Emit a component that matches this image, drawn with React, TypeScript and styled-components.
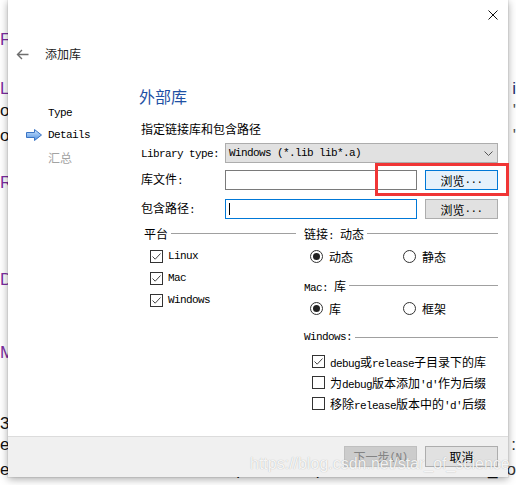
import React from "react";
import styled, { createGlobalStyle } from "styled-components";

const Global = createGlobalStyle`
  html, body { margin: 0; padding: 0; background: #fff; }
  body { width: 516px; height: 485px; overflow: hidden; }
  #root { width: 516px; height: 485px; }
`;

const Screen = styled.div`
  position: relative;
  width: 516px;
  height: 485px;
  overflow: hidden;
  background: #fff;
`;

/* ---------- background page (behind the dialog) ---------- */
const BgPage = styled.div`
  display: flex;
  flex-direction: column;
  font-family: "Liberation Sans", Arial, sans-serif;
  font-size: 17px;
  line-height: 20px;
`;

const BgLine = styled.div<{ $mt: number; $color?: string }>`
  margin-top: ${(p) => p.$mt}px;
  height: 20px;
  display: flex;
  justify-content: space-between;
  white-space: nowrap;
  color: ${(p) => p.$color ?? "#111"};
`;

const BgRight = styled.span<{ $color?: string }>`
  color: ${(p) => p.$color ?? "#333"};
`;

const BgFrag = styled.span<{ $ml: number }>`
  margin-left: ${(p) => p.$ml}px;
`;

const BgRun = styled.span`
  display: flex;
`;

/* ---------- dialog window ---------- */
const Dialog = styled.div`
  position: absolute;
  left: 8px;
  top: 0;
  width: 500px;
  height: 477px;
  background: #fff;
  box-shadow: 0 0 0 1px rgba(0, 0, 0, 0.05), 0 2px 8px rgba(0, 0, 0, 0.35);
  display: flex;
  flex-direction: column;
  font-family: "Noto Sans CJK SC", "Liberation Sans", sans-serif;
  font-size: 12px;
  color: #000;
`;

const TopBar = styled.div`
  height: 40px;
  box-sizing: border-box;
  padding: 10px 10px 0 0;
  display: flex;
  justify-content: flex-end;
  align-items: flex-start;
`;

const CloseButton = styled.span`
  width: 10px;
  height: 10px;
  display: flex;
`;

const Header = styled.div`
  height: 28px;
  display: flex;
  align-items: center;
  padding-left: 8px;
`;

const BackArrow = styled.span`
  width: 13px;
  height: 11px;
  display: flex;
`;

const Title = styled.span`
  margin-left: 16px;
  color: #222;
  font-size: 12px;
  line-height: 16px;
`;

const Body = styled.div`
  flex: 1;
  display: grid;
  grid-template-columns: 131px 1fr;
  padding-right: 10px;
`;

const Nav = styled.nav`
  padding-top: 34px;
  display: flex;
  flex-direction: column;
`;

const NavItem = styled.div<{ $muted?: boolean }>`
  height: 22px;
  display: flex;
  align-items: center;
  gap: 6px;
  padding-left: 18px;
  color: ${(p) => (p.$muted ? "#a3a3a3" : "#000")};
`;

const NavIconSlot = styled.span`
  width: 16px;
  height: 12px;
  display: flex;
`;

const Content = styled.div`
  padding-top: 18px;
  display: flex;
  flex-direction: column;
`;

const Heading = styled.h1`
  margin: 0;
  font-size: 16px;
  line-height: 20px;
  font-weight: 400;
  color: #1e50a4;
`;

const Desc = styled.p`
  margin: 15px 0 0;
  padding-left: 2px;
  line-height: 16px;
`;

const Lat = styled.span`
  font-family: "Liberation Mono", "Courier New", monospace;
  font-size: 11px;
  letter-spacing: -0.6px;
`;

const FormRow = styled.div<{ $mt: number }>`
  margin-top: ${(p) => p.$mt}px;
  height: 20px;
  display: grid;
  grid-template-columns: 86px 1fr;
  align-items: center;
`;

const Label = styled.span`
  padding-left: 2px;
  line-height: 16px;
`;

const Select = styled.div`
  height: 20px;
  box-sizing: border-box;
  border: 1px solid #adadad;
  background: #e1e1e1;
  display: flex;
  align-items: center;
  justify-content: space-between;
  padding: 0 4px 0 3px;
`;

const Chevron = styled.span`
  width: 9px;
  height: 5px;
  display: flex;
`;

const FieldPair = styled.div`
  display: grid;
  grid-template-columns: 192px 73px;
  column-gap: 8px;
`;

const TextInput = styled.div<{ $focused?: boolean }>`
  height: 20px;
  box-sizing: border-box;
  border: 1px solid ${(p) => (p.$focused ? "#0078d7" : "#7a7a7a")};
  background: #fff;
  display: flex;
  align-items: center;
  padding-left: 3px;
`;

const Caret = styled.span`
  width: 1px;
  height: 12px;
  background: #000;
`;

type BtnVariant = "normal" | "hover" | "disabled";

const Button = styled.button<{ $variant: BtnVariant }>`
  width: 73px;
  height: ${(p) => (p.$variant === "disabled" || p.$h ? 21 : 20)}px;
  box-sizing: border-box;
  padding: 0;
  font: inherit;
  display: flex;
  align-items: center;
  justify-content: center;
  border: 1px solid
    ${(p) =>
      p.$variant === "hover" ? "#0078d7" : p.$variant === "disabled" ? "#bfbfbf" : "#adadad"};
  background: ${(p) =>
    p.$variant === "hover" ? "#e5f1fb" : p.$variant === "disabled" ? "#cccccc" : "#e1e1e1"};
  color: ${(p) => (p.$variant === "disabled" ? "#838383" : "#000")};
` as any;

const Groups = styled.div`
  margin-top: 6px;
  padding-left: 5px;
  display: grid;
  grid-template-columns: 152px 194px;
  column-gap: 8px;
  align-items: start;
`;

const GroupCol = styled.div`
  display: flex;
  flex-direction: column;
`;

const GroupHeader = styled.div<{ $mt?: number }>`
  margin-top: ${(p) => p.$mt ?? 0}px;
  height: 16px;
  display: flex;
  align-items: center;
  gap: 3px;
  white-space: nowrap;
`;

const Rule = styled.span`
  flex: 1;
  height: 1px;
  background: #a0a0a0;
`;

const OptionList = styled.div<{ $mt: number }>`
  margin-top: ${(p) => p.$mt}px;
  display: flex;
  flex-direction: column;
`;

const CheckRow = styled.div<{ $indent: number; $h: number }>`
  height: ${(p) => p.$h}px;
  padding-left: ${(p) => p.$indent}px;
  display: flex;
  align-items: center;
  gap: 5px;
  white-space: nowrap;
`;

const RadioRow = styled.div<{ $mt: number }>`
  margin-top: ${(p) => p.$mt}px;
  height: 22px;
  padding-left: 6px;
  display: grid;
  grid-template-columns: 93px 93px;
  align-items: center;
`;

const RadioItem = styled.div`
  display: flex;
  align-items: center;
  gap: 6px;
`;

const Box = styled.span`
  width: 13px;
  height: 13px;
  box-sizing: border-box;
  border: 1px solid #333;
  background: #fff;
  display: flex;
  flex-shrink: 0;
`;

const Ring = styled.span`
  width: 13px;
  height: 13px;
  box-sizing: border-box;
  border: 1px solid #333;
  border-radius: 50%;
  background: #fff;
  display: flex;
  align-items: center;
  justify-content: center;
`;

const Dot = styled.span`
  width: 7px;
  height: 7px;
  border-radius: 50%;
  background: #222;
`;

const Footer = styled.div`
  height: 41px;
  box-sizing: border-box;
  border-top: 1px solid #dcdcdc;
  background: #f0f0f0;
  padding: 9px 10px 0;
  display: flex;
  justify-content: flex-end;
  align-items: flex-start;
  gap: 8px;
`;

/* ---------- overlays ---------- */
const Highlight = styled.div`
  position: absolute;
  left: 375px;
  top: 163px;
  width: 134px;
  height: 33px;
  box-sizing: border-box;
  border: 3px solid #f03535;
`;

const Watermark = styled.div`
  position: absolute;
  left: 250px;
  top: 455px;
  font-family: "Liberation Sans", Arial, sans-serif;
  font-size: 16px;
  line-height: 18px;
  color: rgba(255, 255, 255, 0.9);
  text-shadow: 0 0 1px rgba(0, 0, 0, 0.3);
  white-space: nowrap;
`;

/* ---------- small drawings ---------- */
const CheckMark = () => (
  <svg width="11" height="11" viewBox="0 0 11 11">
    <path d="M1.5 5.5 L4.2 8.2 L9.5 2.5" fill="none" stroke="#444" strokeWidth="1" />
  </svg>
);

const Checkbox = ({ checked }: { checked?: boolean }) => <Box>{checked && <CheckMark />}</Box>;

const Radio = ({ checked }: { checked?: boolean }) => <Ring>{checked && <Dot />}</Ring>;

const NavArrow = () => (
  <svg width="16" height="12" viewBox="0 0 16 12">
    <defs>
      <linearGradient id="navg" x1="0" y1="0" x2="0" y2="1">
        <stop offset="0" stopColor="#cfe6ff" />
        <stop offset="1" stopColor="#4d8fe0" />
      </linearGradient>
    </defs>
    <polygon
      points="0.5,3.5 8.5,3.5 8.5,0.5 15.5,6 8.5,11.5 8.5,8.5 0.5,8.5"
      fill="url(#navg)"
      stroke="#3a74c4"
      strokeWidth="1"
    />
  </svg>
);

export default function App() {
  return (
    <Screen>
      <Global />
      <BgPage>
        <BgLine $mt={30} $color="#7b2c9e">F</BgLine>
        <BgLine $mt={29} $color="#7b2c9e">
          L<BgRight $color="#22306a">i</BgRight>
        </BgLine>
        <BgLine $mt={2}>
          o<BgRight $color="#555">'</BgRight>
        </BgLine>
        <BgLine $mt={5}>
          o<BgRight $color="#555">'</BgRight>
        </BgLine>
        <BgLine $mt={27} $color="#7b2c9e">R</BgLine>
        <BgLine $mt={77} $color="#7b2c9e">D</BgLine>
        <BgLine $mt={53} $color="#7b2c9e">M</BgLine>
        <BgLine $mt={51}>3</BgLine>
        <BgLine $mt={1}>
          e<BgRight>:</BgRight>
        </BgLine>
        <BgLine $mt={5}>
          <BgRun>
            e<BgFrag $ml={208}>,</BgFrag>
            <BgFrag $ml={14}>p</BgFrag>
            <BgFrag $ml={70}>p</BgFrag>
            <BgFrag $ml={78}>,</BgFrag>
            <BgFrag $ml={80}>_</BgFrag>
          </BgRun>
          <BgRight>o</BgRight>
        </BgLine>
      </BgPage>

      <Dialog>
        <TopBar>
          <CloseButton>
            <svg width="10" height="10" viewBox="0 0 10 10">
              <path d="M0.5 0.5L9.5 9.5M9.5 0.5L0.5 9.5" stroke="#111" strokeWidth="1" />
            </svg>
          </CloseButton>
        </TopBar>
        <Header>
          <BackArrow>
            <svg width="13" height="11" viewBox="0 0 13 11">
              <path d="M12.5 5.5H1.5M6 1L1.5 5.5L6 10" fill="none" stroke="#6e6e6e" strokeWidth="1.4" />
            </svg>
          </BackArrow>
          <Title>添加库</Title>
        </Header>

        <Body>
          <Nav>
            <NavItem>
              <NavIconSlot />
              <Lat>Type</Lat>
            </NavItem>
            <NavItem>
              <NavIconSlot>
                <NavArrow />
              </NavIconSlot>
              <Lat>Details</Lat>
            </NavItem>
            <NavItem $muted>
              <NavIconSlot />
              汇总
            </NavItem>
          </Nav>

          <Content>
            <Heading>外部库</Heading>
            <Desc>指定链接库和包含路径</Desc>

            <FormRow $mt={6}>
              <Label>
                <Lat>Library type:</Lat>
              </Label>
              <Select>
                <Lat>Windows (*.lib lib*.a)</Lat>
                <Chevron>
                  <svg width="9" height="5" viewBox="0 0 9 5">
                    <path d="M0.5 0.5L4.5 4.5L8.5 0.5" fill="none" stroke="#555" strokeWidth="1" />
                  </svg>
                </Chevron>
              </Select>
            </FormRow>

            <FormRow $mt={7}>
              <Label>
                库文件<Lat>:</Lat>
              </Label>
              <FieldPair>
                <TextInput />
                <Button $variant="hover">
                  浏览<Lat>...</Lat>
                </Button>
              </FieldPair>
            </FormRow>

            <FormRow $mt={9}>
              <Label>
                包含路径<Lat>:</Lat>
              </Label>
              <FieldPair>
                <TextInput $focused>
                  <Caret />
                </TextInput>
                <Button $variant="normal">
                  浏览<Lat>...</Lat>
                </Button>
              </FieldPair>
            </FormRow>

            <Groups>
              <GroupCol>
                <GroupHeader>
                  平台
                  <Rule />
                </GroupHeader>
                <OptionList $mt={4}>
                  <CheckRow $indent={6} $h={22}>
                    <Checkbox checked />
                    <Lat>Linux</Lat>
                  </CheckRow>
                  <CheckRow $indent={6} $h={22}>
                    <Checkbox checked />
                    <Lat>Mac</Lat>
                  </CheckRow>
                  <CheckRow $indent={6} $h={22}>
                    <Checkbox checked />
                    <Lat>Windows</Lat>
                  </CheckRow>
                </OptionList>
              </GroupCol>

              <GroupCol>
                <GroupHeader>
                  <span>
                    链接<Lat>: </Lat>动态
                  </span>
                  <Rule />
                </GroupHeader>
                <RadioRow $mt={4}>
                  <RadioItem>
                    <Radio checked />
                    动态
                  </RadioItem>
                  <RadioItem>
                    <Radio />
                    静态
                  </RadioItem>
                </RadioRow>

                <GroupHeader $mt={10}>
                  <span>
                    <Lat>Mac: </Lat>库
                  </span>
                  <Rule />
                </GroupHeader>
                <RadioRow $mt={4}>
                  <RadioItem>
                    <Radio checked />
                    库
                  </RadioItem>
                  <RadioItem>
                    <Radio />
                    框架
                  </RadioItem>
                </RadioRow>

                <GroupHeader $mt={10}>
                  <Lat>Windows:</Lat>
                  <Rule />
                </GroupHeader>
                <OptionList $mt={6}>
                  <CheckRow $indent={8} $h={21}>
                    <Checkbox checked />
                    <span>
                      <Lat>debug</Lat>或<Lat>release</Lat>子目录下的库
                    </span>
                  </CheckRow>
                  <CheckRow $indent={8} $h={21}>
                    <Checkbox />
                    <span>
                      为<Lat>debug</Lat>版本添加<Lat>'d'</Lat>作为后缀
                    </span>
                  </CheckRow>
                  <CheckRow $indent={8} $h={21}>
                    <Checkbox />
                    <span>
                      移除<Lat>release</Lat>版本中的<Lat>'d'</Lat>后缀
                    </span>
                  </CheckRow>
                </OptionList>
              </GroupCol>
            </Groups>
          </Content>
        </Body>

        <Footer>
          <Button $variant="disabled">
            下一步<Lat>(N)</Lat>
          </Button>
          <Button $variant="normal" $h>
            取消
          </Button>
        </Footer>
      </Dialog>

      <Highlight />
      <Watermark>https://blog.csdn.net/star_of_science</Watermark>
    </Screen>
  );
}
